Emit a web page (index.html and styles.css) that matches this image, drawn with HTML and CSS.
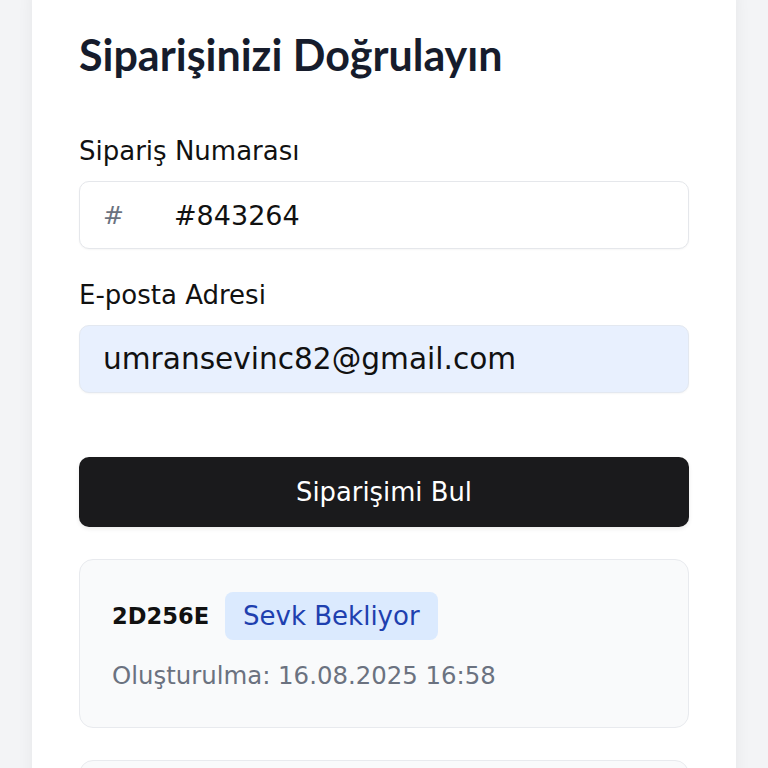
FILE: index.html
```html
<!DOCTYPE html>
<html lang="tr">
<head>
<meta charset="utf-8">
<title>Siparişinizi Doğrulayın</title>
<link rel="stylesheet" href="styles.css">
</head>
<body>
<main class="card">
  <h1 class="title">Siparişinizi Doğrulayın</h1>
  <form class="form">
    <label class="label" for="order">Sipariş Numarası</label>
    <div class="input input-white">
      <span class="prefix">#</span>
      <span class="value value-order">#843264</span>
    </div>
    <label class="label label-second" for="email">E-posta Adresi</label>
    <div class="input input-autofill">
      <span class="value value-email">umransevinc82@gmail.com</span>
    </div>
    <button type="button" class="submit">Siparişimi Bul</button>
  </form>
  <section class="result">
    <div class="result-head">
      <span class="order-code">2D256E</span>
      <span class="badge">Sevk Bekliyor</span>
    </div>
    <div class="created">Oluşturulma: 16.08.2025 16:58</div>
  </section>
  <section class="result result-next"></section>
</main>
</body>
</html>
```
FILE: styles.css
```css
html, body {
  margin: 0;
  padding: 0;
  background: #f3f4f6;
  font-family: "DejaVu Sans", "Noto Sans", sans-serif;
  height: 768px;
  overflow: hidden;
}

.card {
  margin: -20px 32px 0;
  background: #ffffff;
  border-radius: 16px;
  box-shadow: 0 4px 16px rgba(17, 24, 39, 0.06);
  padding: 50px 47px 40px;
  min-height: 900px;
  box-sizing: border-box;
}

.title {
  margin: 0;
  font-family: "Lato", "Noto Sans", sans-serif;
  font-size: 43px;
  line-height: 50px;
  font-weight: 700;
  color: #161c2c;
}

.form {
  display: flex;
  flex-direction: column;
  margin-top: 56px;
}

.label {
  display: block;
  font-size: 26px;
  line-height: 30px;
  color: #111111;
  margin-bottom: 15px;
}

.label-second {
  margin-top: 31px;
}

.input {
  height: 68px;
  box-sizing: border-box;
  border: 1px solid #e5e7eb;
  border-radius: 10px;
  display: flex;
  align-items: center;
  padding: 0 23px;
  box-shadow: 0 1px 2px rgba(0, 0, 0, 0.04);
}

.input-white {
  background: #ffffff;
}

.input-autofill {
  background: #e8f0fe;
  border-color: #e3e8f0;
}

.prefix {
  font-size: 25px;
  color: #6b7280;
  width: 71px;
}

.value {
  color: #111111;
}

.value-order {
  font-size: 27px;
}

.value-email {
  font-size: 29.6px;
}

.submit {
  margin-top: 64px;
  height: 70px;
  border: none;
  border-radius: 10px;
  background: #1a1a1c;
  color: #ffffff;
  font-family: inherit;
  font-size: 25.8px;
  box-shadow: 0 2px 4px rgba(0, 0, 0, 0.08);
}

.result {
  margin-top: 32px;
  background: #f9fafb;
  border: 1px solid #e8eaee;
  border-radius: 14px;
  padding: 32px 32px 36px;
  box-sizing: border-box;
}

.result-head {
  display: flex;
  align-items: center;
  gap: 16px;
}

.order-code {
  font-size: 22.6px;
  font-weight: 700;
  color: #111111;
}

.badge {
  background: #dbeafe;
  color: #1e40af;
  font-size: 26px;
  line-height: 48px;
  padding: 0 18px;
  border-radius: 8px;
}

.created {
  margin-top: 21px;
  font-size: 24.4px;
  line-height: 30px;
  color: #6b7280;
}

.result-next {
  height: 120px;
}
```
